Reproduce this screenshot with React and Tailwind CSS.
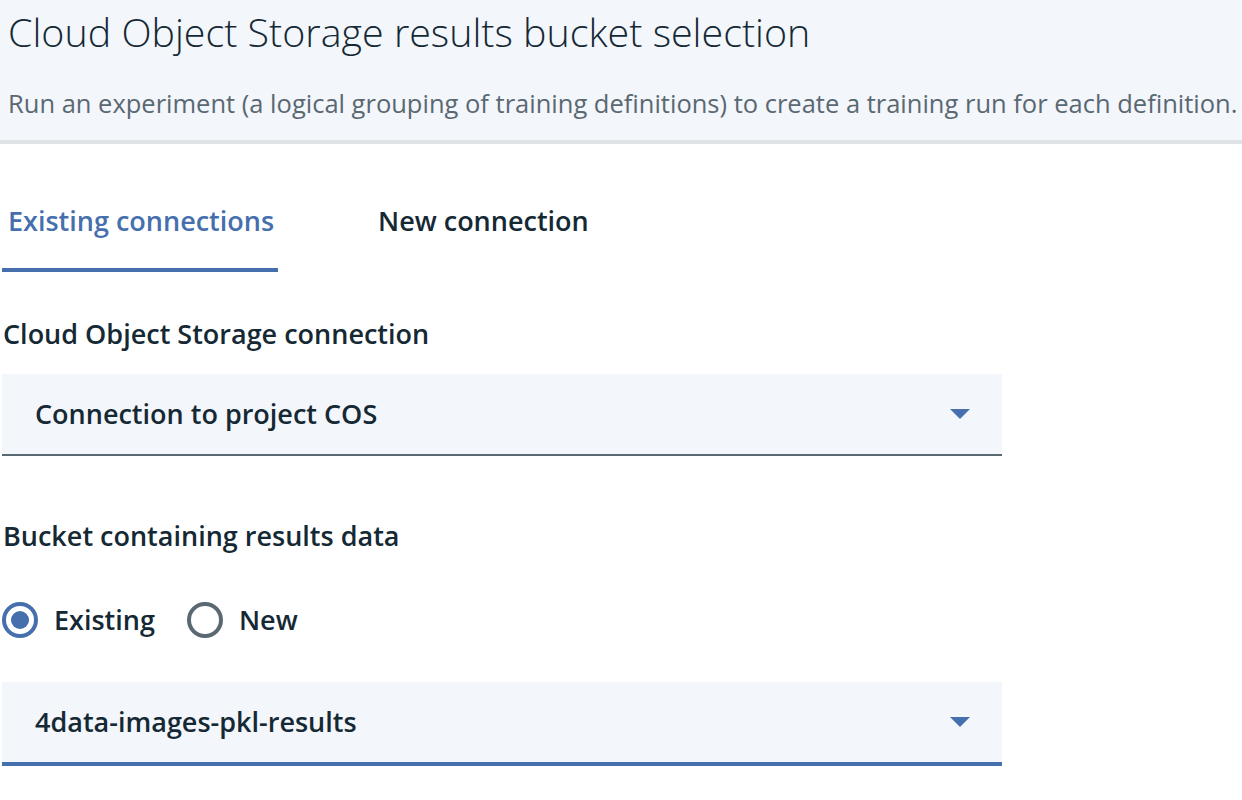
import React, { useState } from 'react';

const SelectBox = ({ value, active }) => (
    <div
        className={`w-[1000px] ml-[2px] bg-[#f3f6fb] flex items-center justify-between pl-[33px] pr-[32px] text-[27px] font-semibold text-[#152935] ${
            active ? 'h-[84px] border-b-4 border-[#466fae]' : 'h-[82px] border-b-2 border-[#5a6872]'
        }`}
    >
        <span className="leading-[32px]">{value}</span>
        <svg width="20" height="10" viewBox="0 0 20 10">
            <path d="M0 0 L20 0 L10 10 Z" fill="#466fae" />
        </svg>
    </div>
);

const Radio = ({ label, checked, onClick }) => (
    <button onClick={onClick} className="flex items-center gap-4">
        <span
            className={`w-[36px] h-[36px] rounded-full border-4 flex items-center justify-center ${
                checked ? 'border-[#466fae]' : 'border-[#5a6872]'
            }`}
        >
            {checked && <span className="w-[18px] h-[18px] rounded-full bg-[#466fae]" />}
        </span>
        <span className="text-[27px] font-semibold text-[#152935] leading-[32px]">{label}</span>
    </button>
);

const App = () => {
    const [tab, setTab] = useState('existing');
    const [bucket, setBucket] = useState('existing');

    return (
        <div className="w-[1242px] h-[800px] bg-white font-['Open_Sans',sans-serif] overflow-hidden">
            <div className="h-[144px] bg-[#f3f6fb] border-b-4 border-[#dfe3e6] pl-2">
                <div className="h-[66px] flex items-center text-[39.4px] font-light text-[#152935] whitespace-nowrap">
                    Cloud Object Storage results bucket selection
                </div>
                <div className="h-[74px] flex items-center text-[25.5px] text-[#5a6872] whitespace-nowrap">
                    Run an experiment (a logical grouping of training definitions) to create a training run for each definition.
                </div>
            </div>

            <div className="flex ml-[2px]">
                <button
                    onClick={() => setTab('existing')}
                    className={`w-[276px] text-left pl-[6px] pt-[61px] pb-[31px] leading-[32px] text-[27px] font-semibold border-b-4 whitespace-nowrap ${
                        tab === 'existing' ? 'text-[#466fae] border-[#466fae]' : 'text-[#152935] border-transparent'
                    }`}
                >
                    Existing connections
                </button>
                <button
                    onClick={() => setTab('new')}
                    className={`ml-[94px] text-left pl-[6px] pr-[6px] pt-[61px] pb-[31px] leading-[32px] text-[27px] font-semibold border-b-4 whitespace-nowrap ${
                        tab === 'new' ? 'text-[#466fae] border-[#466fae]' : 'text-[#152935] border-transparent'
                    }`}
                >
                    New connection
                </button>
            </div>

            <div className="mt-[46px] ml-[3px] text-[27px] font-semibold text-[#152935] leading-[32px]">
                Cloud Object Storage connection
            </div>
            <div className="mt-[24px]">
                <SelectBox value="Connection to project COS" />
            </div>

            <div className="mt-[64px] ml-[3px] text-[27px] font-semibold text-[#152935] leading-[32px]">
                Bucket containing results data
            </div>
            <div className="mt-[50px] ml-[2px] flex items-center gap-[32px] h-[36px]">
                <Radio label="Existing" checked={bucket === 'existing'} onClick={() => setBucket('existing')} />
                <Radio label="New" checked={bucket === 'new'} onClick={() => setBucket('new')} />
            </div>
            <div className="mt-[44px]">
                <SelectBox value="4data-images-pkl-results" active />
            </div>
        </div>
    );
};

export default App;
